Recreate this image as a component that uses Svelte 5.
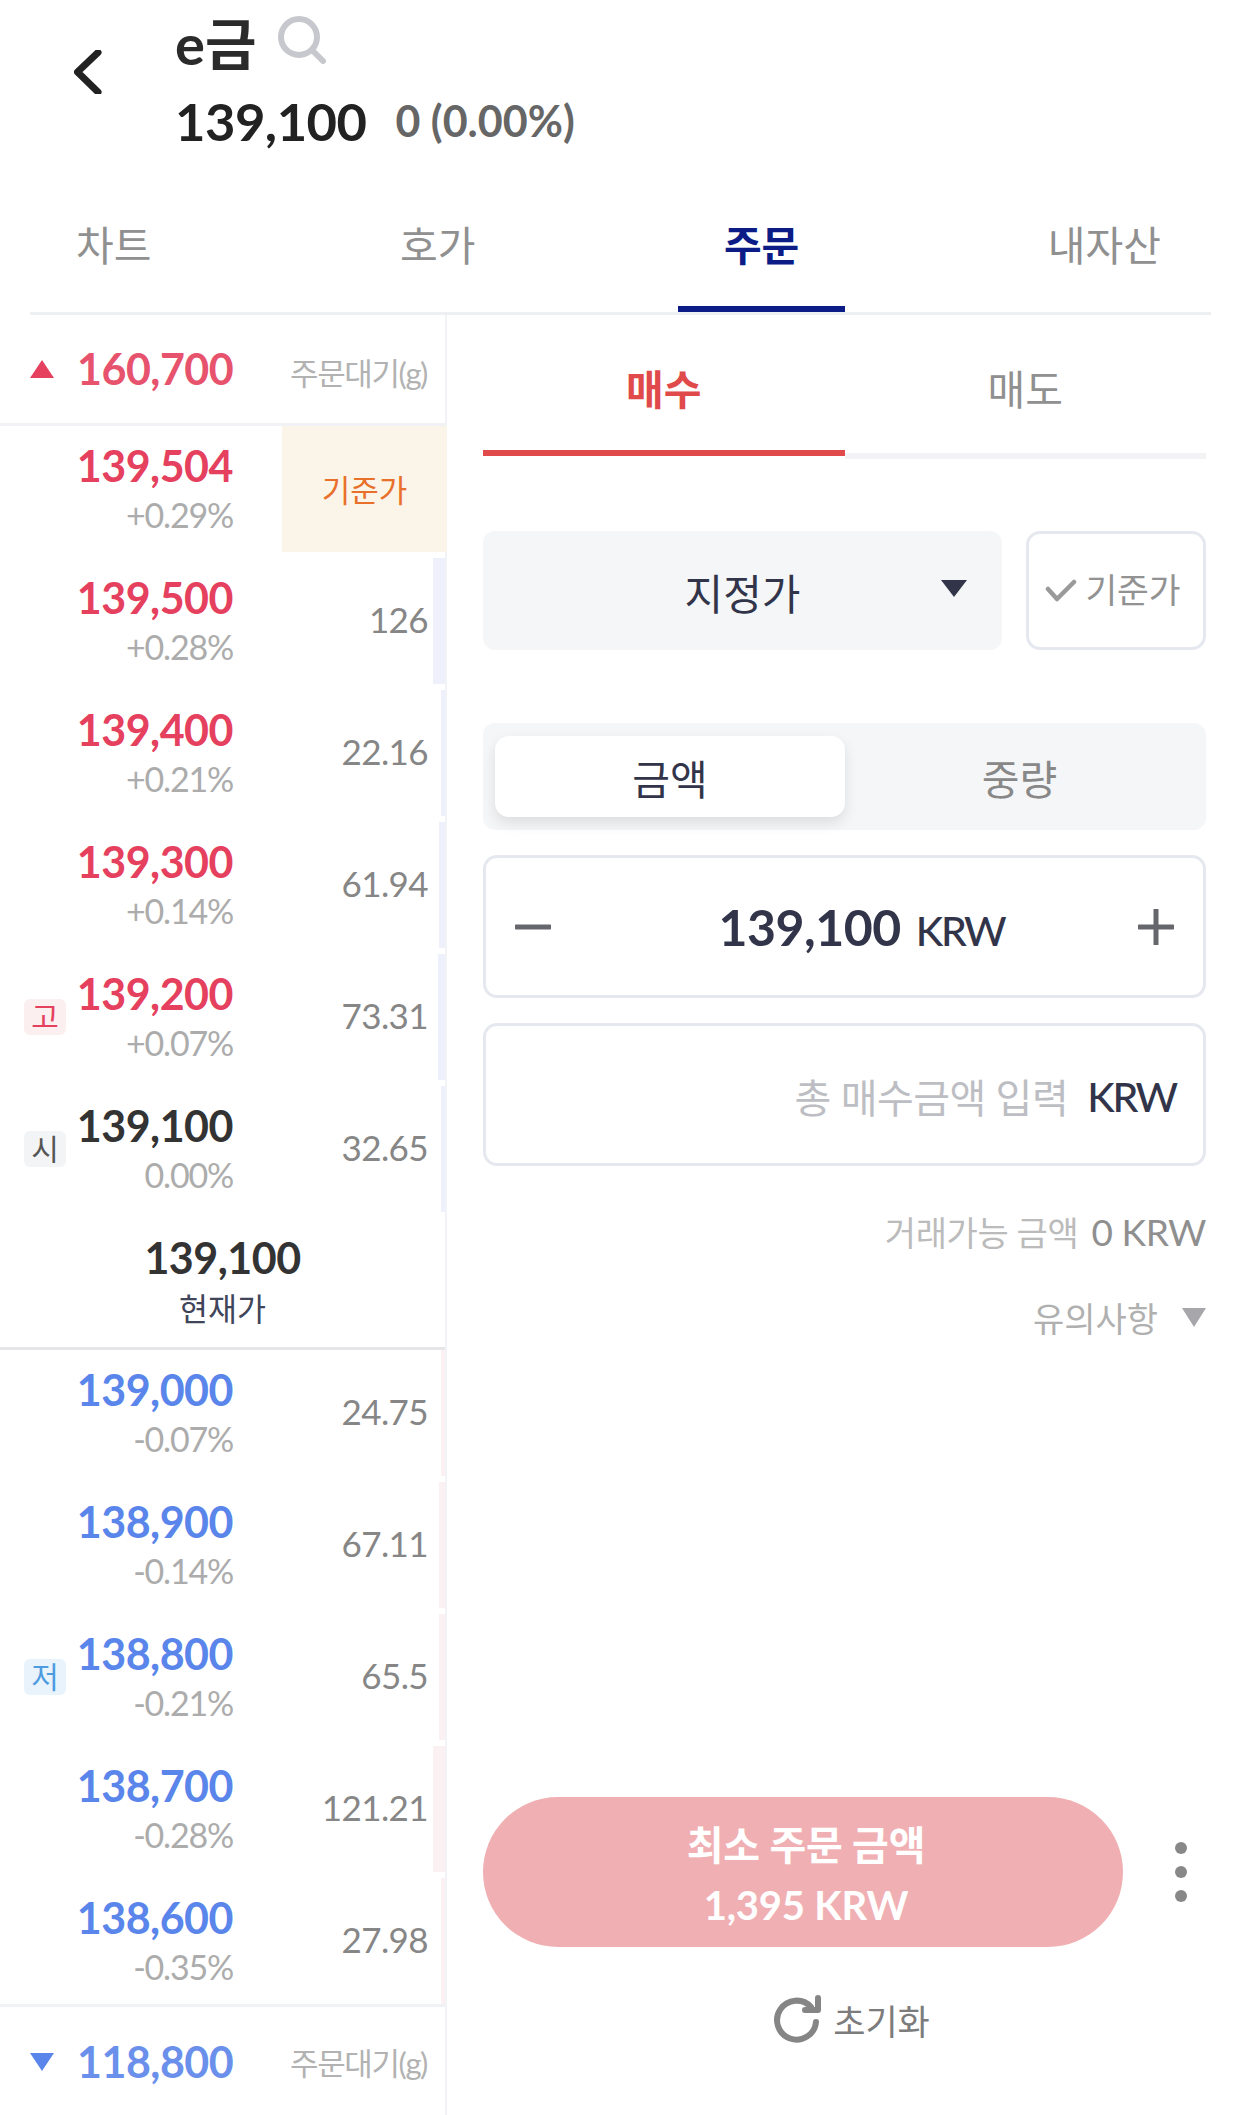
<script>
  const asks = [
    { price: "139,500", pct: "+0.28%", qty: "126" },
    { price: "139,400", pct: "+0.21%", qty: "22.16" },
    { price: "139,300", pct: "+0.14%", qty: "61.94" },
    { price: "139,200", pct: "+0.07%", qty: "73.31", tag: "고", tagClass: "high" },
    { price: "139,100", pct: "0.00%", qty: "32.65", tag: "시", tagClass: "open", flat: true },
  ];
  const bids = [
    { price: "139,000", pct: "-0.07%", qty: "24.75" },
    { price: "138,900", pct: "-0.14%", qty: "67.11" },
    { price: "138,800", pct: "-0.21%", qty: "65.5", tag: "저", tagClass: "low" },
    { price: "138,700", pct: "-0.28%", qty: "121.21" },
    { price: "138,600", pct: "-0.35%", qty: "27.98" },
  ];
  const tabs = ["차트", "호가", "주문", "내자산"];
  const barWidth = (qty) => Math.max(4, (parseFloat(qty) / 126) * 12);
</script>

<div class="page">
  <header class="top">
    <svg class="back" viewBox="0 0 30 44" width="30" height="44">
      <path d="M24 2.5 L3.5 22 L24 42" fill="none" stroke="#222" stroke-width="7" stroke-linecap="round" stroke-linejoin="round" />
    </svg>
    <div class="title">
      <div class="name">
        <span>e금</span>
        <svg viewBox="0 0 48 48" width="48" height="48">
          <circle cx="21" cy="21" r="18" fill="none" stroke="#c6c8cd" stroke-width="6" />
          <path d="M34 34 L45 45" stroke="#c6c8cd" stroke-width="6" stroke-linecap="round" />
        </svg>
      </div>
      <div class="quote">
        <strong>139,100</strong>
        <span>0 (0.00%)</span>
      </div>
    </div>
  </header>

  <nav class="tabs">
    {#each tabs as tab}
      <div class="tab" class:active={tab === "주문"}>{tab}</div>
    {/each}
  </nav>

  <main class="body">
    <section class="book">
      <div class="limit">
        <i class="tri up"></i>
        <b class="red">160,700</b>
        <span>주문대기(g)</span>
      </div>

      <div class="row">
        <div class="slot"></div>
        <div class="pc">
          <b class="red">139,504</b>
          <small>+0.29%</small>
        </div>
        <div class="base">기준가</div>
      </div>

      {#each asks as r}
        <div class="row">
          <div class="slot">{#if r.tag}<span class="tag {r.tagClass}">{r.tag}</span>{/if}</div>
          <div class="pc">
            <b class={r.flat ? "dark" : "red"}>{r.price}</b>
            <small>{r.pct}</small>
          </div>
          <div class="qty">{r.qty}</div>
          <div class="bar-wrap"><div class="bar ask" style="width: {barWidth(r.qty)}px"></div></div>
        </div>
      {/each}

      <div class="current">
        <b>139,100</b>
        <span>현재가</span>
      </div>

      {#each bids as r}
        <div class="row">
          <div class="slot">{#if r.tag}<span class="tag {r.tagClass}">{r.tag}</span>{/if}</div>
          <div class="pc">
            <b class="blue">{r.price}</b>
            <small>{r.pct}</small>
          </div>
          <div class="qty">{r.qty}</div>
          <div class="bar-wrap"><div class="bar bid" style="width: {barWidth(r.qty)}px"></div></div>
        </div>
      {/each}

      <div class="limit bottom">
        <i class="tri down"></i>
        <b class="blue">118,800</b>
        <span>주문대기(g)</span>
      </div>
    </section>

    <section class="order">
      <div class="side">
        <div class="buy">매수</div>
        <div class="sell">매도</div>
      </div>

      <div class="type">
        <div class="select">
          <span>지정가</span>
          <i class="caret"></i>
        </div>
        <div class="basebtn">
          <svg viewBox="0 0 32 24" width="32" height="24">
            <path d="M3 10 L12 20 L29 3" fill="none" stroke="#9a9a9a" stroke-width="4.5" stroke-linecap="round" stroke-linejoin="round" />
          </svg>
          기준가
        </div>
      </div>

      <div class="seg">
        <div class="on">금액</div>
        <div>중량</div>
      </div>

      <div class="field price">
        <svg viewBox="0 0 36 36" width="36" height="36"><path d="M1 18 H35" stroke="#66676d" stroke-width="5" stroke-linecap="round" /></svg>
        <div class="val"><b>139,100</b><span>KRW</span></div>
        <svg viewBox="0 0 36 36" width="36" height="36"><path d="M1 18 H35 M18 1 V35" stroke="#66676d" stroke-width="5" stroke-linecap="round" /></svg>
      </div>

      <div class="field total">
        <span class="ph">총 매수금액 입력</span>
        <span class="unit">KRW</span>
      </div>

      <div class="avail"><span>거래가능 금액</span> 0 KRW</div>
      <div class="note">유의사항 <i class="caret small"></i></div>

      <div class="submit">
        <div class="cta">
          <div>최소 주문 금액</div>
          <div>1,395 KRW</div>
        </div>
        <div class="dots"><i></i><i></i><i></i></div>
      </div>

      <div class="reset">
        <svg viewBox="0 0 48 48" width="48" height="48">
          <path d="M43 27 A19.5 19.5 0 1 1 38 12" fill="none" stroke="#858585" stroke-width="6" stroke-linecap="round" />
          <path d="M32 15 H45 V3" fill="none" stroke="#858585" stroke-width="6" stroke-linecap="round" stroke-linejoin="round" />
        </svg>
        초기화
      </div>
    </section>
  </main>
</div>

<style>
  :global(body) {
    margin: 0;
    background: #fff;
  }

  .page {
    width: 1242px;
    height: 2115px;
    overflow: hidden;
    font-family: Lato, "Noto Sans CJK KR", sans-serif;
    color: #333;
  }

  /* header */
  .top {
    height: 165px;
    display: flex;
  }
  .back {
    margin: 50px 0 0 74px;
  }
  .title {
    margin-left: 71px;
  }
  .name {
    display: flex;
    align-items: center;
    gap: 22px;
    height: 80px;
    margin-bottom: 6px;
    font-size: 56px;
    font-weight: 700;
    color: #2b2b2b;
  }
  .quote {
    display: flex;
    align-items: center;
    gap: 29px;
    height: 68px;
  }
  .quote strong {
    font-size: 52.5px;
    letter-spacing: -0.5px;
    color: #222;
  }
  .quote span {
    font-size: 43px;
    font-weight: 700;
    color: #666;
  }

  .tabs {
    margin: 0 31px 0 30px;
    padding-right: 4px;
    height: 150px;
    display: flex;
    justify-content: space-between;
    box-sizing: border-box;
    border-bottom: 3px solid #eeeff2;
  }
  .tab {
    padding: 0 46px;
    font-size: 41px;
    line-height: 161px;
    color: #909090;
    margin-bottom: -1px;
  }
  .tab.active {
    color: #0b1c86;
    font-weight: 700;
    border-bottom: 6px solid #0b1c86;
    height: 141px;
  }

  .body {
    display: flex;
    height: 1800px;
  }

  /* order book */
  .book {
    width: 447px;
    flex: none;
    border-right: 2px solid #f2f3f6;
    box-sizing: border-box;
  }
  .book b {
    font-size: 43px;
    font-weight: 700;
    letter-spacing: -0.5px;
    line-height: 48px;
  }
  .red {
    color: #e5405e;
  }
  .blue {
    color: #5a85ea;
  }
  .dark {
    color: #333;
  }
  .limit {
    height: 108px;
    display: flex;
    align-items: center;
    border-bottom: 3px solid #f1f2f6;
    padding: 0 18px 0 30px;
  }
  .limit b {
    margin-left: 23px;
    opacity: 0.9;
  }
  .limit span {
    margin-left: auto;
    font-size: 31px;
    letter-spacing: -1.4px;
    color: #b2b2b2;
    padding-top: 4px;
  }
  .limit.bottom {
    border-bottom: 0;
    border-top: 3px solid #f1f2f6;
    height: 110px;
    margin-top: -6px;
  }
  .limit.bottom span {
    padding-top: 0;
    margin-top: -2px;
  }
  .tri {
    width: 0;
    height: 0;
    border-left: 12px solid transparent;
    border-right: 12px solid transparent;
  }
  .tri.up {
    border-bottom: 18px solid #e5405e;
  }
  .tri.down {
    border-top: 18px solid #5a85ea;
  }

  .row {
    height: 126px;
    margin-bottom: 6px;
    display: flex;
    align-items: center;
    padding-left: 24px;
  }
  .slot {
    width: 42px;
    flex: none;
  }
  .tag {
    display: block;
    width: 42px;
    height: 36px;
    line-height: 35px;
    border-radius: 6px;
    text-align: center;
    font-size: 30px;
  }
  .tag.high {
    background: #fbeff0;
    color: #e5405e;
  }
  .tag.open {
    background: #f3f4f6;
    color: #555;
  }
  .tag.low {
    background: #e9f3fc;
    color: #4d9be0;
  }
  .pc {
    width: 167px;
    flex: none;
    text-align: right;
    display: flex;
    flex-direction: column;
    align-items: flex-end;
    margin-top: 2px;
  }
  .pc small {
    font-size: 34px;
    letter-spacing: -1.2px;
    line-height: 49px;
    color: #acacac;
  }
  .qty {
    flex: 1;
    text-align: right;
    font-size: 35px;
    letter-spacing: -0.6px;
    color: #868686;
    padding-right: 5px;
    margin-top: -5px;
  }
  .bar-wrap {
    width: 12px;
    height: 100%;
    display: flex;
    justify-content: flex-end;
  }
  .bar {
    height: 100%;
  }
  .bar.ask {
    background: #eef1fb;
  }
  .bar.bid {
    background: #fbf0f2;
  }
  .base {
    width: 165px;
    height: 100%;
    margin-left: auto;
    margin-right: -2px;
    background: #fbf5e9;
    color: #e9702b;
    font-size: 31px;
    display: flex;
    align-items: center;
    justify-content: center;
    padding-bottom: 2px;
    box-sizing: border-box;
  }
  .current {
    height: 135px;
    margin-top: -6px;
    border-bottom: 3px solid #e6e6e8;
    display: flex;
    flex-direction: column;
    align-items: center;
  }
  .current b {
    margin-top: 22px;
    color: #333;
  }
  .current span {
    font-size: 31.5px;
    color: #40455a;
    line-height: 54px;
  }

  /* order form */
  .order {
    flex: 1;
    display: flex;
    flex-direction: column;
    padding: 0 36px;
    box-sizing: border-box;
  }
  .side {
    height: 144px;
    display: flex;
    font-size: 41px;
    line-height: 149px;
    text-align: center;
    margin-bottom: 72px;
  }
  .side div {
    flex: 1;
  }
  .buy {
    color: #e04a4b;
    font-weight: 700;
    height: 135px;
    border-bottom: 6px solid #e04a4b;
  }
  .sell {
    color: #909090;
    height: 138px;
    border-bottom: 6px solid #f3f3f5;
  }

  .type {
    display: flex;
    justify-content: space-between;
    height: 119px;
    margin-bottom: 73px;
  }
  .select {
    width: 519px;
    background: #f5f6f8;
    border-radius: 12px;
    display: flex;
    align-items: center;
    justify-content: center;
    position: relative;
    font-size: 42px;
    padding-top: 2px;
    box-sizing: border-box;
    color: #32354a;
  }
  .caret {
    width: 0;
    height: 0;
    border-left: 13px solid transparent;
    border-right: 13px solid transparent;
    border-top: 17px solid #32354a;
  }
  .select .caret {
    position: absolute;
    right: 35px;
    top: 49px;
  }
  .basebtn {
    width: 180px;
    box-sizing: border-box;
    border: 3px solid #e6e8ef;
    border-radius: 14px;
    display: flex;
    align-items: center;
    justify-content: center;
    gap: 8px;
    font-size: 34.5px;
    color: #929292;
    padding: 0 6px 6px 0;
  }
  .basebtn svg {
    margin-top: 6px;
  }

  .seg {
    height: 107px;
    background: #f5f6f8;
    border-radius: 12px;
    padding: 13px 12px;
    box-sizing: border-box;
    display: flex;
    font-size: 41px;
    color: #888;
    text-align: center;
    line-height: 87px;
    margin-bottom: 25px;
  }
  .seg div {
    flex: 1;
  }
  .seg .on {
    flex: none;
    width: 350px;
    background: #fff;
    color: #32354a;
    border-radius: 14px;
    box-shadow: 0 6px 14px rgba(0, 0, 0, 0.1);
  }

  .field {
    height: 143px;
    box-sizing: border-box;
    border: 3px solid #e6e8ef;
    border-radius: 14px;
    display: flex;
    align-items: center;
    margin-bottom: 25px;
  }
  .price {
    justify-content: space-between;
    padding: 0 29px;
  }
  .val {
    display: flex;
    align-items: baseline;
    gap: 15px;
    color: #32354a;
    margin-left: 34px;
  }
  .val b {
    font-size: 50px;
    letter-spacing: -0.5px;
  }
  .val span {
    font-size: 41px;
    font-weight: 500;
    letter-spacing: -2.2px;
  }
  .total {
    justify-content: flex-end;
    padding: 3px 27px 0 0;
    margin-bottom: 0;
    gap: 19px;
  }
  .ph {
    font-size: 40px;
    letter-spacing: -0.5px;
    color: #bdbec3;
  }
  .unit {
    font-size: 41px;
    font-weight: 500;
    letter-spacing: -2.2px;
    color: #32354a;
  }
  .avail {
    text-align: right;
    margin-top: 45px;
    height: 42px;
    line-height: 42px;
    font-size: 37px;
    letter-spacing: -0.4px;
    color: #8f8f8f;
  }
  .avail span {
    font-size: 34px;
    color: #bbb;
    margin-right: 4px;
  }
  .note {
    margin-top: 42px;
    height: 44px;
    display: flex;
    justify-content: flex-end;
    align-items: center;
    gap: 24px;
    font-size: 34px;
    color: #b0b0b0;
  }
  .caret.small {
    border-left-width: 12px;
    border-right-width: 12px;
    border-top: 19px solid #a6a6ab;
    margin-top: 0;
  }
  .submit {
    margin-top: auto;
    display: flex;
    align-items: center;
  }
  .cta {
    width: 640px;
    height: 150px;
    border-radius: 75px;
    background: #f0b0b3;
    color: #fff;
    font-weight: 700;
    font-size: 40px;
    line-height: 60px;
    letter-spacing: -0.2px;
    text-align: center;
    box-sizing: border-box;
    padding: 18px 0 0 6px;
  }
  .dots {
    margin-left: 52px;
    display: flex;
    flex-direction: column;
    gap: 12px;
  }
  .dots i {
    width: 12px;
    height: 12px;
    border-radius: 50%;
    background: #888;
  }
  .reset {
    height: 48px;
    margin: 48px 0 72px;
    display: flex;
    align-items: center;
    justify-content: center;
    gap: 12px;
    padding-left: 14px;
    font-size: 35px;
    color: #7c7c7c;
  }
</style>
